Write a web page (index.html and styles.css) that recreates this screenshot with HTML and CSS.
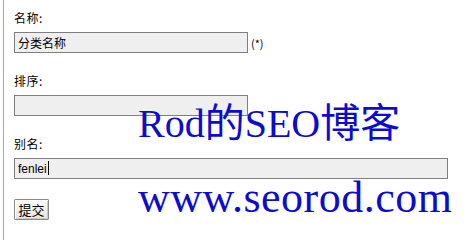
FILE: index.html
```html
<!DOCTYPE html>
<html lang="zh-CN">
<head>
<meta charset="utf-8" />
<title>添加分类</title>
<link rel="stylesheet" href="styles.css">
</head>
<body>

<!-- ===== category form ===== -->
<div class="wrap">
  <form class="form" onsubmit="return false">
    <div class="row">
      <label class="lbl" for="name">名称:</label>
      <div class="line">
        <input class="field short" id="name" type="text" value="分类名称">
        <span class="req">(*)</span>
      </div>
    </div>

    <div class="row">
      <label class="lbl" for="order">排序:</label>
      <div class="line">
        <input class="field short" id="order" type="text" value="">
      </div>
    </div>

    <div class="row">
      <label class="lbl" for="alias">别名:</label>
      <div class="line">
        <input class="field long" id="alias" type="text" value="fenlei"><span class="caret"></span>
      </div>
    </div>

    <button class="btn" type="submit">提交</button>
  </form>

  <!-- blog watermark over the form -->
  <div class="mark" aria-hidden="true">
    <div class="mark-title">Rod的SEO博客</div>
    <div class="mark-url">www.seorod.com</div>
  </div>
</div>

</body>
</html>
```

FILE: styles.css
```css
/* ===== base ===== */
*{box-sizing:border-box}
html,body{margin:0;background:#fff;color:#000;font:400 12px/16px "Noto Sans CJK SC", "DejaVu Sans", sans-serif}

/* left rule + content column */
.wrap{
  position:relative;
  margin-left:3px;
  min-height:240px;
  border-left:1px solid #a8a8a8;
  padding:10px 0 0 10px;
}

/* ===== form rows ===== */
.row{margin-bottom:20px}
.lbl{display:block;height:16px;margin-bottom:6px;letter-spacing:.5px}
.line{display:flex;align-items:center}

.field{
  height:21px; margin:0; padding:0 3px;
  border:1px solid #7f7f7f; background:#efefef;
  font:400 12px/19px "Noto Sans CJK SC", "Liberation Sans", sans-serif; color:#000;
  outline:none;
}
.short{width:234px}
.long{width:434px;font-family:"Liberation Sans", "Noto Sans CJK SC", sans-serif}
.req{margin-left:3px;font-size:11px}

/* text caret after "fenlei" */
.caret{position:absolute;left:44px;top:161px;width:1px;height:14px;background:#000}

.btn{
  display:block; width:35px; height:21px; margin:1px 0 0; padding:0;
  border:1px solid #8a8a8a; border-radius:1px;
  background:linear-gradient(#fafafa,#e6e6e6);
  box-shadow:inset 1px 1px 0 #fff, inset -1px -1px 0 #c9c9c9;
  font:400 13px/19px "Noto Sans CJK SC", sans-serif; color:#000;
}

/* ===== watermark ===== */
.mark{
  position:absolute; left:134px; top:102px;
  color:#0c0cd0; font-family:"Liberation Serif", "Noto Sans CJK SC", serif;
  pointer-events:none; white-space:nowrap;
}
.mark-title{font-size:40px;line-height:44px}
.mark-url{font-size:44px;line-height:50px;margin-top:27px;letter-spacing:.5px}
```
